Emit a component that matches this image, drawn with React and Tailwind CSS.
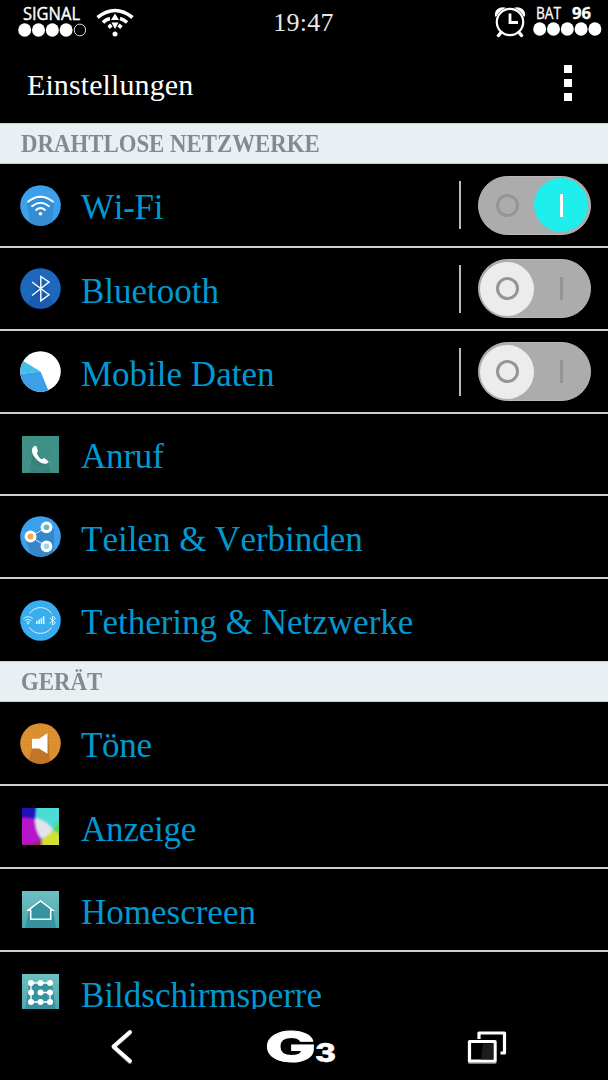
import clsx from 'clsx';

const SERIF = "font-['Liberation_Serif',serif]";

function WifiIcon() {
  return (
    <svg viewBox="0 0 41 41" className="size-[41px]" fill="none">
      <circle cx="20.5" cy="20.5" r="20.3" fill="#3ca0ec" />
      <path d="M7 18l3 20a20.3 20.3 0 0 0 22-1l2-19Q20 4 7 18z" fill="#358dd3" />
      <g stroke="#fff" strokeWidth="1.8" strokeLinecap="round">
        <path d="M8 16.7q12.5-10 25 0" />
        <path d="M12 21.2q8.5-7 17 0" />
        <path d="M16 25q4.5-4 9 0" />
      </g>
      <circle cx="20.5" cy="28.7" r="1.8" fill="#fff" />
    </svg>
  );
}

function BluetoothIcon() {
  return (
    <svg viewBox="0 0 41 41" className="size-[41px]" fill="none">
      <circle cx="20.5" cy="20.5" r="20.3" fill="#1d67bd" />
      <path d="M12 27l-4 9a20.3 20.3 0 0 0 25 0l-4-9-8.5-19z" fill="#195bb0" />
      <path d="M12 14l17 12.8-8.2 6V8.5l8.2 5.5L12 27.5" stroke="#fff" strokeWidth="1.4" />
    </svg>
  );
}

function DataIcon() {
  return (
    <svg viewBox="0 0 41 41" className="size-[41px]">
      <circle cx="20.5" cy="20.5" r="20.3" fill="#fff" />
      <path d="M20.5 20.5L28.3 39.2A20.3 20.3 0 0 1 .4 23z" fill="#3c9fe9" />
      <path d="M20.5 20.5L.4 23A20.3 20.3 0 0 1 3.3 10z" fill="#42bfe9" />
    </svg>
  );
}

function CallIcon() {
  return (
    <svg viewBox="0 0 37 37" className="size-[37px]" fill="none">
      <rect width="37" height="37" fill="#3e8f86" />
      <path d="M11 17L7 37h22l-3-11z" fill="#368279" />
      <g stroke="#4b9b91" strokeWidth=".5">
        <circle cx="18" cy="19" r="13" />
        <circle cx="18" cy="19" r="16" />
        <circle cx="18" cy="19" r="19" />
        <circle cx="18" cy="19" r="22" />
      </g>
      <path
        d="M12.5 10c-4 2-2.8 7.5.2 11.2 3.5 4.5 8.5 7.8 12.6 6l1.4-1.6-4.4-3.6-2.7 1.3c-2-1.3-4-3.8-4.7-6.1l1-2.2-1.5-4.9z"
        fill="#fff"
      />
    </svg>
  );
}

function ShareIcon() {
  return (
    <svg viewBox="0 0 41 41" className="size-[41px]">
      <circle cx="20.5" cy="20.5" r="20.3" fill="#3ca0ec" />
      <path d="M5 23l6 15a20.3 20.3 0 0 0 21-1l2-6V13l-7-5z" fill="#3587ca" />
      <path d="M26.5 11.3L10.5 20.5l16 10" fill="none" stroke="#d9eefa" strokeWidth="1" />
      <circle cx="26.5" cy="11.3" r="5.9" fill="#fff" />
      <circle cx="10.5" cy="20.5" r="5.9" fill="#fff" />
      <circle cx="26.5" cy="30.3" r="5.9" fill="#fff" />
      <circle cx="26.5" cy="11.3" r="2.8" fill="#64bcb6" />
      <circle cx="10.5" cy="20.5" r="2.9" fill="#f3aa49" />
      <circle cx="26.5" cy="30.3" r="2.8" fill="#a4d4ee" />
    </svg>
  );
}

function TetheringIcon() {
  return (
    <svg viewBox="0 0 41 41" className="size-[41px]" fill="none" stroke="#e8f7ff" strokeWidth=".9">
      <circle cx="20.5" cy="20.5" r="20.3" fill="#38aef0" stroke="none" />
      <path d="M9.5 13.5a13.2 13.2 0 0 1 22 0M9.5 27.5a13.2 13.2 0 0 0 22 0" />
      <path d="M3.5 18.5q4.7-3.6 9.4 0M5 20.5q3.2-2.5 6.4 0M6.6 22.2q1.6-1.3 3.2 0" />
      <path d="M8.2 22.8v1.4" strokeWidth="1.5" />
      <path d="M16.8 24v-3M19.1 24v-4.5M21.4 24v-6M23.7 24v-7.800" strokeWidth="1.5" />
      <path d="M29.500 17.800l6 4.900-3 2.400v-9l3 2.200-6 5" />
    </svg>
  );
}

function SoundIcon() {
  return (
    <svg viewBox="0 0 41 41" className="size-[41px]">
      <defs>
        <pattern id="grille" width="3.4" height="3.4" patternUnits="userSpaceOnUse">
          <circle cx="1.7" cy="1.7" r=".7" fill="#c97e25" />
        </pattern>
      </defs>
      <circle cx="20.5" cy="20.5" r="20.3" fill="#dd9130" />
      <circle cx="20.5" cy="20.5" r="20" fill="url(#grille)" />
      <path d="M12 25L9 37a20.3 20.3 0 0 0 21 1l-2-27z" fill="#c27529" />
      <path d="M12 15.7h7l8.5-5.4v20.4L19 25.400h-7z" fill="#fff" />
    </svg>
  );
}

function DisplayIcon() {
  return (
    <svg viewBox="0 0 37 37" className="size-[37px]">
      <defs>
        <filter id="glow" x="-20%" y="-20%" width="140%" height="140%">
          <feGaussianBlur stdDeviation=".8" />
        </filter>
      </defs>
      <rect width="37" height="37" fill="#2010b8" />
      <g filter="url(#glow)">
        <path d="M-3 9.500q10-1 17 2l6 26-23 2z" fill="#b512cb" />
        <path d="M14-3h26v17l-9 8-18-11z" fill="#4cdcd8" />
        <path d="M37 12h3v17l-9-7z" fill="#52d85a" />
        <path d="M30.500 21.500l9.500 6.500v12H20l-1-9z" fill="#d4df34" />
        <path d="M13 10q11 2 18 11.500-5 7-12 9-6-8-6-20.500z" fill="#e4e3ec" />
        <path d="M-2 36.500q12 .5 14-1.500 5-1 8-4l-2 9H-2z" fill="#98234a" />
      </g>
    </svg>
  );
}

function TealTile({ children }) {
  return (
    <svg viewBox="0 0 37 37" className="size-[37px]" fill="none">
      <defs>
        <linearGradient id="teal" x1="0" y1="0" x2="0" y2="1">
          <stop offset="0" stopColor="#6dc0c2" />
          <stop offset="1" stopColor="#4ea6ae" />
        </linearGradient>
      </defs>
      <rect width="37" height="37" fill="url(#teal)" />
      {children}
    </svg>
  );
}

function HomescreenIcon() {
  return (
    <TealTile>
      <path d="M7 19L3 37h31l-3-18-12-9z" fill="#3792a0" />
      <path d="M6.3 19.2L18.5 10l12.2 9.2H28.7v9H8.7v-9z" stroke="#fff" strokeWidth="1.5" />
    </TealTile>
  );
}

function LockIcon() {
  const points = [9, 18.5, 28];
  return (
    <TealTile>
      <path d="M7 9L3 37h31L30 9z" fill="#3792a0" />
      <path d="M28 9H9v19h19v-9.5H18.5" stroke="#fff" strokeWidth="1.3" />
      {points.map((y) => points.map((x) => <circle key={`${x}-${y}`} cx={x} cy={y} r="3" fill="#fff" />))}
    </TealTile>
  );
}

const wireless = [
  { label: 'Wi-Fi', icon: <WifiIcon />, height: 'h-[84px]', toggle: 'on', tracking: 'tracking-[-0.3px]' },
  { label: 'Bluetooth', icon: <BluetoothIcon />, height: 'h-[83px]', toggle: 'off' },
  { label: 'Mobile Daten', icon: <DataIcon />, height: 'h-[83px]', toggle: 'off' },
  { label: 'Anruf', icon: <CallIcon />, height: 'h-[82px]', tracking: 'tracking-[-0.2px]' },
  { label: 'Teilen & Verbinden', icon: <ShareIcon />, height: 'h-[83px]' },
  { label: 'Tethering & Netzwerke', icon: <TetheringIcon />, height: 'h-[82px]', last: true },
];

const device = [
  { label: 'Töne', icon: <SoundIcon />, height: 'h-[84px]', tracking: 'tracking-[-0.3px]' },
  { label: 'Anzeige', icon: <DisplayIcon />, height: 'h-[83px]', tracking: 'tracking-[-0.2px]' },
  { label: 'Homescreen', icon: <HomescreenIcon />, height: 'h-[83px]' },
  { label: 'Bildschirmsperre', icon: <LockIcon />, height: 'h-[81px]', last: true },
];

function Toggle({ on }) {
  return (
    <div className="flex h-[59px] w-[113px] items-center rounded-full border border-[#b8b8b8] bg-[#acacac] px-px">
      <div className={clsx('flex size-[54px] items-center justify-center rounded-full', !on && 'bg-[#ececec]')}>
        <span className="size-[23px] rounded-full border-[3px] border-[#959595]" />
      </div>
      <div className={clsx('flex size-[54px] items-center justify-center rounded-full', on && 'bg-[#1eefed]')}>
        <span className={clsx('h-[23px] w-[3px]', on ? 'bg-white' : 'bg-[#959595]')} />
      </div>
    </div>
  );
}

function Row({ label, icon, height, toggle, last, tracking }) {
  return (
    <div className={clsx('flex items-center pl-5 pr-[17px]', height, !last && 'border-b-2 border-[#cfcfcf]')}>
      <div className="flex w-[41px] shrink-0 justify-center">{icon}</div>
      <span
        className={clsx(
          'flex-1 whitespace-nowrap pl-[20px] pt-[6px] text-[35px] leading-[40px] text-[#0099d2] [font-kerning:none]',
          tracking
        )}
      >
        {label}
      </span>
      {toggle && (
        <>
          <div className="mr-[17px] h-[48px] w-[2px] bg-[#b9b9b9]" />
          <Toggle on={toggle === 'on'} />
        </>
      )}
    </div>
  );
}

function SectionTitle({ children }) {
  return (
    <h2 className="h-[41px] border-y border-[#c9cfd1] bg-[#e8f0f3] pl-[21px] text-[25.5px] font-bold leading-[40px] text-[#848b8e] [font-kerning:none]">
      <span className="inline-block origin-left scale-x-[0.895]">{children}</span>
    </h2>
  );
}

function Dots({ filled }) {
  return (
    <svg viewBox="0 0 70 14" className="h-[14px] w-[70px]">
      {[0, 1, 2, 3, 4].map((i) => (
        <ellipse
          key={i}
          cx={6.7 + i * 13.8}
          cy="7"
          rx={i < filled ? 6.5 : 5.7}
          ry={i < filled ? 6.7 : 5.9}
          fill={i < filled ? '#fff' : 'none'}
          stroke={i < filled ? 'none' : '#ddd'}
        />
      ))}
    </svg>
  );
}

function StatusBar() {
  return (
    <div className="flex h-[46px] shrink-0 items-start px-1 text-white">
      <div className="flex w-[84px] flex-col items-end">
        <svg viewBox="0 0 70 23" className="h-[23px] w-[70px] overflow-visible">
          <text
            x="5"
            y="19.5"
            textLength="57"
            lengthAdjust="spacingAndGlyphs"
            className="fill-white stroke-white font-['Open_Sans',sans-serif] text-[18px]"
            strokeWidth=".4"
          >
            SIGNAL
          </text>
        </svg>
        <Dots filled={4} />
      </div>
      <svg viewBox="0 0 38 30" className="ml-2 mt-2 h-[30px] w-[38px]" fill="none" stroke="#fff">
        <path d="M1.5 9.5q17.5-14 35 0" strokeWidth="3.6" />
        <path d="M7 14.5q3-3.200 7-4M24 10.500q4 1 7 4M12.500 19.500l3-2.500M25.500 19.500l-3-2.500" strokeWidth="3.600" />
        <path d="M19 5.500l4 6.500h-8zM15.500 14.500h7L19 21z" fill="#fff" stroke="none" />
        <circle cx="19" cy="26" r="2.500" fill="#fff" stroke="none" />
      </svg>
      <div className="flex flex-1 justify-center pr-[21px]">
        <span className="pt-2 text-[26px] leading-[30px] tracking-[0.3px] text-[#e8e8e8]">19:47</span>
      </div>
      <svg viewBox="0 0 32 32" className="mt-[6px] h-[32px] w-[32px]" fill="none" stroke="#fff" strokeLinecap="round">
        <path d="M1.500 11Q-.5 6 3.500 3t9-1zM30.500 11q2-5-2-8t-9-1z" fill="#fff" stroke="none" />
        <circle cx="16" cy="16" r="14.600" fill="#000" stroke="none" />
        <circle cx="16" cy="16" r="13.200" strokeWidth="2.200" />
        <path d="M16 7.500v9h8" strokeWidth="2.800" strokeLinecap="butt" />
        <path d="M7 26.500l-2.500 3M25 26.500l2.500 3" strokeWidth="3.400" />
      </svg>
      <div className="ml-[7px] flex w-[71px] flex-col">
        <svg viewBox="0 0 71 22" className="h-[22px] w-[71px] overflow-visible fill-white stroke-white">
          <text x="3" y="18.5" textLength="25" lengthAdjust="spacingAndGlyphs" strokeWidth=".3" className="font-['Open_Sans',sans-serif] text-[16px]">
            BAT
          </text>
          <text x="39" y="18.5" textLength="19" lengthAdjust="spacingAndGlyphs" strokeWidth=".3" className="font-['Open_Sans',sans-serif] text-[16px] font-bold">
            96
          </text>
        </svg>
        <Dots filled={5} />
      </div>
    </div>
  );
}

function NavBar() {
  return (
    <nav className="flex h-[71px] shrink-0 items-center justify-between bg-black pl-[109px] pr-[101px] pt-[2px]">
      <svg viewBox="0 0 24 36" className="h-[36px] w-[24px]" fill="none" strokeLinecap="round" strokeLinejoin="round">
        <path d="M21 5.5L4.500 20 21 35" stroke="#666" strokeWidth="3" />
        <path d="M21 4L4.500 18.500 21 33" stroke="#fff" strokeWidth="4" />
      </svg>
      <svg
        viewBox="0 0 70 54"
        className="h-[54px] w-[70px] overflow-visible fill-white stroke-white font-['Inter',sans-serif] font-extrabold"
      >
        <text x="0" y="42.5" textLength="51" lengthAdjust="spacingAndGlyphs" strokeWidth="1" className="text-[43px]">
          G
        </text>
        <text x="50" y="42.500" textLength="21" lengthAdjust="spacingAndGlyphs" strokeWidth=".5" className="text-[26px]">
          3
        </text>
      </svg>
      <svg viewBox="0 0 40 36" className="mt-[2px] h-[36px] w-[40px]" fill="none" stroke="#fff" strokeWidth="3.2" strokeLinejoin="round">
        <path d="M12 10V4h25.500v20h-4" />
        <rect x="2.500" y="13.500" width="25.500" height="20" stroke="#777" />
        <rect x="2.500" y="12.500" width="25.500" height="19.500" fill="#000" />
        <path d="M14 30.500l2-16h10.500v16z" fill="#1c1c1c" stroke="none" />
      </svg>
    </nav>
  );
}

export default function App() {
  return (
    <div className={clsx('flex h-[1080px] w-[608px] flex-col overflow-hidden bg-black', SERIF)}>
      <StatusBar />
      <header className="flex h-[77px] shrink-0 items-center justify-between pl-[27px] pr-9">
        <h1 className="text-[30px] leading-[36px] tracking-[0.1px] text-white">Einstellungen</h1>
        <div className="flex flex-col gap-[6px] pb-1">
          <span className="size-2 bg-white" />
          <span className="size-2 bg-white" />
          <span className="size-2 bg-white" />
        </div>
      </header>
      <main className="min-h-0 flex-1 overflow-hidden">
        <SectionTitle>DRAHTLOSE NETZWERKE</SectionTitle>
        {wireless.map((item) => (
          <Row key={item.label} {...item} />
        ))}
        <SectionTitle>GERÄT</SectionTitle>
        {device.map((item) => (
          <Row key={item.label} {...item} />
        ))}
      </main>
      <NavBar />
    </div>
  );
}
